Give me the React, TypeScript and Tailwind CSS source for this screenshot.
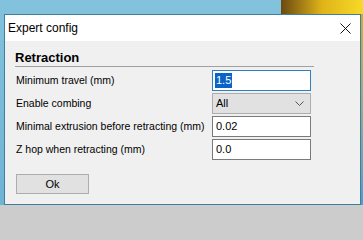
import React from "react";

const font = { fontFamily: '"Liberation Sans", Arial, sans-serif' };

function Row({ label, children }: { label: string; children: React.ReactNode }) {
  return (
    <div className="flex items-center h-[21px]">
      <div className="w-[196px] text-[10.5px] text-black leading-none whitespace-nowrap">{label}</div>
      {children}
    </div>
  );
}

function TextBox({ value, focused }: { value: string; focused?: boolean }) {
  return (
    <div
      className={`w-[99px] h-[21px] bg-white border flex items-center px-[2px] text-[11px] leading-none ${
        focused ? "border-[#2f7fc4]" : "border-[#7a7a7a]"
      }`}
    >
      {focused ? (
        <span className="bg-[#0a64c8] text-white px-[1px] h-[15px] flex items-center">{value}</span>
      ) : (
        <span className="px-[1px]">{value}</span>
      )}
    </div>
  );
}

export default function App() {
  return (
    <div className="w-[363px] h-[240px] bg-[#cccccc] overflow-hidden" style={font}>
      <div className="h-[205px] flex flex-col bg-gradient-to-b from-[#83c2dd] to-[#6fb3d5]">
        <div className="h-[14px] flex">
          <div className="flex-1" />
          <div className="w-[82px] bg-gradient-to-r from-[#6b4a10] via-[#e0b418] to-[#f7d928]" />
        </div>
        <div className="flex flex-1">
          <div className="w-[4px]" />
          <div className="w-[357px] flex flex-col border border-[#3f7f9e] bg-[#f0f0f0]">
            <div className="h-[26px] bg-white flex items-center justify-between pl-[3px] pr-[9px]">
              <span className="text-[12px] text-black">Expert config</span>
              <svg width="11" height="11" viewBox="0 0 11 11">
                <path d="M0.5 0.5 L10.5 10.5 M10.5 0.5 L0.5 10.5" stroke="#111" strokeWidth="1" />
              </svg>
            </div>
            <div className="flex-1 pl-[10px] pt-[10px]">
              <div className="w-[299px] border-b border-[#a0a0a0] pb-[3px] text-[13px] font-bold leading-none h-[16px]">
                Retraction
              </div>
              <div className="flex flex-col gap-[2px] mt-[3px] pl-[1px]">
                <Row label="Minimum travel (mm)">
                  <TextBox value="1.5" focused />
                </Row>
                <Row label="Enable combing">
                  <div className="w-[99px] h-[21px] bg-[#e1e1e1] border border-[#adadad] flex items-center justify-between pl-[3px] pr-[6px] text-[11px] leading-none">
                    <span>All</span>
                    <svg width="9" height="5" viewBox="0 0 9 5">
                      <path d="M0.5 0.5 L4.5 4.5 L8.5 0.5" stroke="#555" strokeWidth="1" fill="none" />
                    </svg>
                  </div>
                </Row>
                <Row label="Minimal extrusion before retracting (mm)">
                  <TextBox value="0.02" />
                </Row>
                <Row label="Z hop when retracting (mm)">
                  <TextBox value="0.0" />
                </Row>
              </div>
              <div className="mt-[14px] pl-[1px]">
                <div className="w-[73px] h-[20px] bg-[#e1e1e1] border border-[#adadad] flex items-center justify-center text-[11px]">
                  Ok
                </div>
              </div>
            </div>
          </div>
          <div className="flex-1 bg-gradient-to-b from-[#c9b020] to-[#4aa0d0]" />
        </div>
      </div>
    </div>
  );
}
